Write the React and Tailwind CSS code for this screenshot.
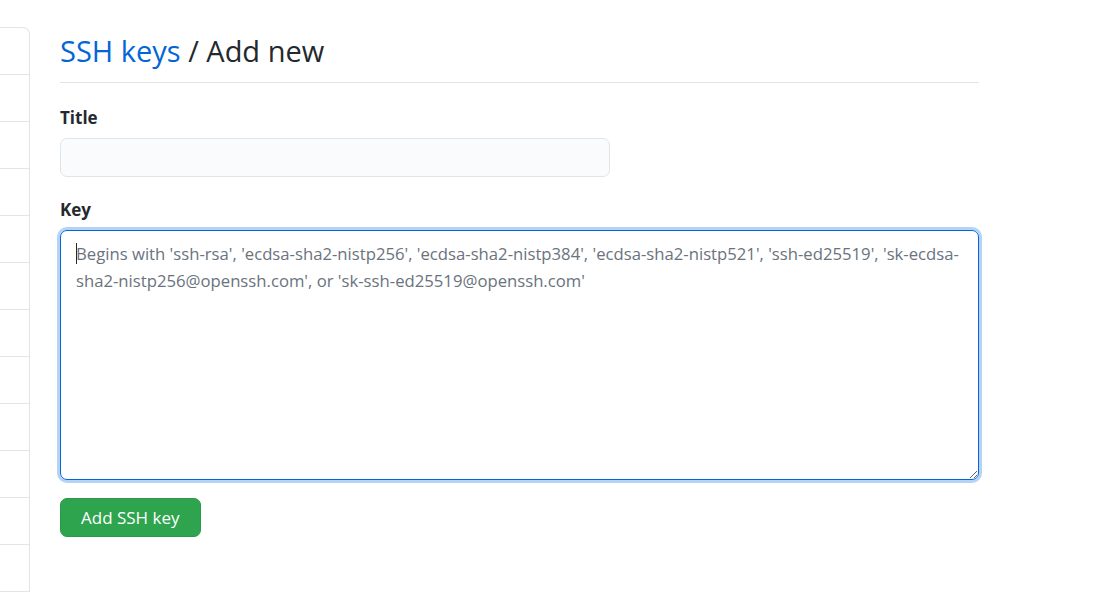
import React from 'react'

const font = { fontFamily: '"Open Sans", "Noto Sans", "Liberation Sans", sans-serif' }

const Sidebar = () => {
  const rows = Array.from({ length: 12 })
  return (
    <div className="w-[30px] shrink-0 pt-[27px]">
      <div className="border-t border-r border-[#e1e4e8] rounded-tr-[7px]">
        {rows.map((_, i) => (
          <div key={i} className="h-[47px] border-b border-[#e1e4e8]"></div>
        ))}
      </div>
    </div>
  )
}

export default function App() {
  return (
    <div className="flex bg-white min-h-[595px] h-[595px] overflow-hidden text-[#24292e]" style={font}>
      <Sidebar />
      <div className="ml-[30px] w-[919px] pt-[28px]">
        {/* Subhead */}
        <div className="border-b border-[#e1e4e8] pb-[9px]">
          <h1 className="text-[29px] leading-[45px] font-normal">
            <a className="text-[#0366d6]">SSH keys</a> / Add new
          </h1>
        </div>

        {/* Title */}
        <div className="mt-[22px]">
          <label className="block text-[17px] font-bold leading-[26px]">Title</label>
          <input
            type="text"
            className="mt-[7px] block w-[550px] h-[39px] bg-[#fafbfc] border border-[#e1e4e8] rounded-[7px] px-3 outline-none"
          />
        </div>

        {/* Key */}
        <div className="mt-[20px]">
          <label className="block text-[17px] font-bold leading-[26px]">Key</label>
          <div className="relative mt-[7px]">
            <textarea
              placeholder="Begins with 'ssh-rsa', 'ecdsa-sha2-nistp256', 'ecdsa-sha2-nistp384', 'ecdsa-sha2-nistp521', 'ssh-ed25519', 'sk-ecdsa-sha2-nistp256@openssh.com', or 'sk-ssh-ed25519@openssh.com'"
              className="block w-[919px] h-[250px] border border-[#0366d6] rounded-[7px] shadow-[0_0_0_3px_#b4d3f5] px-[15px] pt-[9px] pb-[11px] text-[16.7px] leading-[27px] placeholder:text-[#6a737d] outline-none resize"
              style={font}
            />
            <span className="absolute left-[16px] top-[13px] w-px h-[21px] bg-[#24292e]"></span>
          </div>
        </div>

        <button className="mt-[18px] h-[39px] px-[20px] bg-[#2ea44f] text-white text-[17px] rounded-[7px] border border-[#2a9a4a]">
          Add SSH key
        </button>
      </div>
    </div>
  )
}
